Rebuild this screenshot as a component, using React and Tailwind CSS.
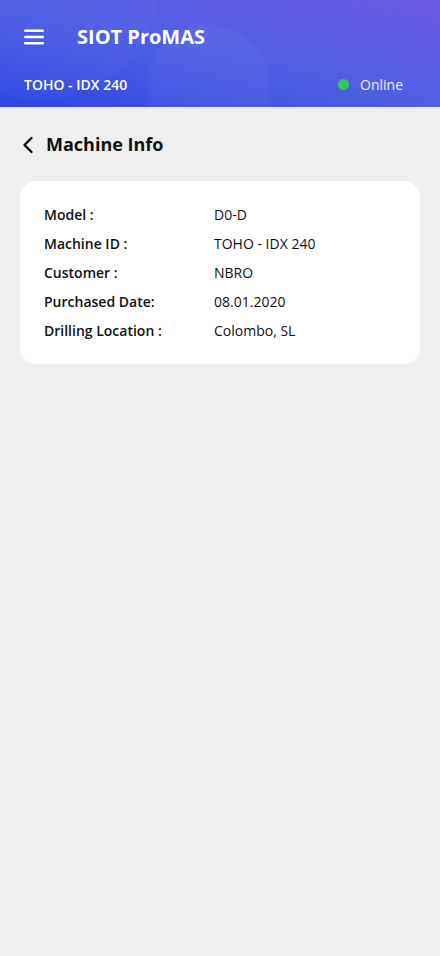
import React from "react";

const rows = [
  ["Model :", "D0-D"],
  ["Machine ID :", "TOHO - IDX 240"],
  ["Customer :", "NBRO"],
  ["Purchased Date:", "08.01.2020"],
  ["Drilling Location :", "Colombo, SL"],
];

export default function App() {
  return (
    <div className="min-h-[956px] w-[440px] bg-[#efefef] font-['Open_Sans',sans-serif]">
      <header className="relative h-[107px] overflow-hidden bg-gradient-to-tr from-[#2f44e3] via-[#4f5fe4] to-[#6c5ae5]">
        <div className="absolute left-[148px] top-[24px] h-[200px] w-[122px] rounded-full bg-white/[0.04] blur-[2px]" />
        <div className="absolute -left-[80px] -top-[140px] h-[240px] w-[240px] rounded-full bg-white/[0.025]" />
        <div className="relative flex h-[72px] items-center pl-[24px] pt-[1px]">
          <svg width="20" height="16" viewBox="0 0 20 16" className="text-white">
            <rect x="0" y="0.5" width="20" height="2.4" rx="1.2" fill="currentColor" />
            <rect x="0" y="6.8" width="20" height="2.4" rx="1.2" fill="currentColor" />
            <rect x="0" y="13.1" width="20" height="2.4" rx="1.2" fill="currentColor" />
          </svg>
          <span className="ml-[33px] text-[20px] font-bold text-white">SIOT ProMAS</span>
        </div>
        <div className="relative flex items-center justify-between pl-[24px] pr-[37px] pt-[2px]">
          <span className="text-[14px] font-semibold text-white">TOHO - IDX 240</span>
          <div className="flex items-center">
            <span className="h-[11px] w-[11px] rounded-full bg-[#35c75a]" />
            <span className="ml-[11px] text-[14px] text-white/90">Online</span>
          </div>
        </div>
      </header>
      <div className="flex items-center pl-[22px] pt-[24px]">
        <svg width="12" height="18" viewBox="0 0 12 18">
          <path d="M9.5 2 L2.5 9 L9.5 16" fill="none" stroke="#111" strokeWidth="2.4" strokeLinecap="round" strokeLinejoin="round" />
        </svg>
        <span className="ml-[12px] text-[18px] font-bold text-[#111]">Machine Info</span>
      </div>
      <div className="mx-[20px] mt-[23px] rounded-[16px] bg-white px-[24px] py-[19px]">
        {rows.map(([k, v]) => (
          <div key={k} className="flex h-[29px] items-center text-[14px] text-[#111]">
            <span className="w-[170px] font-semibold">{k}</span>
            <span>{v}</span>
          </div>
        ))}
      </div>
    </div>
  );
}
